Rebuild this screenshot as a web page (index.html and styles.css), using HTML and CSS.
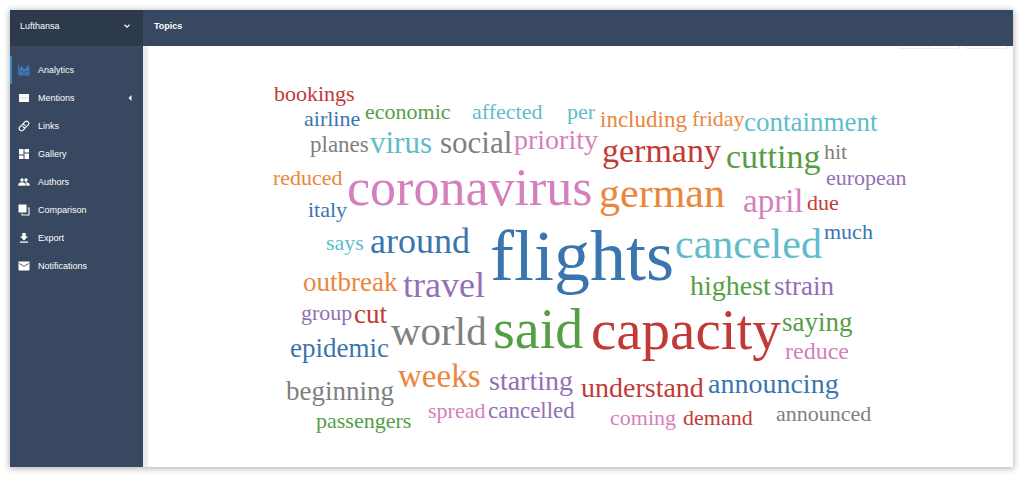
FILE: index.html
```html
<!DOCTYPE html>
<html lang="en">
<head>
<meta charset="utf-8">
<meta name="viewport" content="width=device-width, initial-scale=1">
<title>Topics</title>
<link rel="stylesheet" href="styles.css">
</head>
<body>
<div class="app">
  <header class="topbar">
    <div class="account">
      <select class="account-select" aria-label="Account"><option>Lufthansa</option></select>
      <svg class="account-chevron" viewBox="0 0 8 8" aria-hidden="true"><path d="M1.500 2.800 4 5.200 6.500 2.800" fill="none" stroke="currentColor" stroke-width="1.200"/></svg>
    </div>
    <h1 class="title">Topics</h1>
  </header>
  <div class="body">
    <nav class="sidebar" aria-label="Main">
      <a class="item active" href="#"><svg class="icon" viewBox="0 0 24 24"><path d="M1.500 2v20H24" fill="none" stroke="currentColor" stroke-width="2"/><path d="M3 20V9l5-5 4 6 4-2 4-6 3 5v13z" fill="currentColor" opacity=".85"/><path d="M4 17l4-4 4 5 4-4 3 3 3-4" fill="none" stroke="#2b4a74" stroke-width="1.500"/></svg><span>Analytics</span></a>
      <a class="item" href="#"><svg class="icon" viewBox="0 0 24 24"><path d="M2 4h20v16H2z" fill="currentColor"/><path d="M2 12h20" stroke="#c3c9d1" stroke-width="1.500"/></svg><span>Mentions</span><svg class="caret" viewBox="0 0 4 6"><path d="M3.500 0v6L.5 3z" fill="currentColor"/></svg></a>
      <a class="item" href="#"><svg class="icon" viewBox="0 0 24 24"><g transform="rotate(-45 12 12)" fill="none" stroke="currentColor" stroke-width="2.400" stroke-linecap="round"><path d="M10 16.500H5a4.500 4.500 0 0 1 0-9h5a4.500 4.500 0 0 1 4.300 5.500"/><path d="M14 7.500h5a4.500 4.500 0 0 1 0 9h-5A4.500 4.500 0 0 1 9.700 11"/></g></svg><span>Links</span></a>
      <a class="item" href="#"><svg class="icon" viewBox="0 0 24 24"><path d="M2 2h9v11H2zM2 15h9v7H2zM13 11h9v11h-9zM13 2h9v7h-9z" fill="currentColor"/></svg><span>Gallery</span></a>
      <a class="item" href="#"><svg class="icon" viewBox="0 0 24 24"><path d="M16 11c1.660 0 2.990-1.340 2.990-3S17.660 5 16 5s-3 1.340-3 3 1.340 3 3 3zm-8 0c1.660 0 2.990-1.340 2.990-3S9.660 5 8 5 5 6.340 5 8s1.340 3 3 3zm0 2c-2.330 0-7 1.170-7 3.500V19h14v-2.500c0-2.330-4.670-3.500-7-3.500zm8 0c-.29 0-.62.02-.97.05 1.160.84 1.970 1.970 1.970 3.450V19h6v-2.500c0-2.330-4.670-3.500-7-3.500z" fill="currentColor" stroke="currentColor" stroke-width=".8"/></svg><span>Authors</span></a>
      <a class="item" href="#"><svg class="icon" viewBox="0 0 24 24"><path d="M1 1h16v16H1z" fill="currentColor"/><path d="M19.500 8H22v14H8v-3" fill="none" stroke="currentColor" stroke-width="2.200"/></svg><span>Comparison</span></a>
      <a class="item" href="#"><svg class="icon" viewBox="0 0 24 24"><path d="M20 9h-4.500V2h-7v7H4l8 8zM4 19v2.500h16V19z" fill="currentColor"/></svg><span>Export</span></a>
      <a class="item" href="#"><svg class="icon" viewBox="0 0 24 24"><path d="M22 3H2C.9 3 1 3.900 1 5v14c0 1.100.9 2 2 2h18c1.100 0 2-.9 2-2V5c0-1.100.1-2-1-2zm-1 5-9 5.500L3 8V6.200l9 5.600 9-5.600z" fill="currentColor"/></svg><span>Notifications</span></a>
    </nav>
    <main class="content">
      <div class="toolbar" aria-hidden="true">
        <div class="group"><div class="segment"></div><div class="segment"></div></div>
        <div class="group single"></div>
      </div>
      <svg class="cloud" viewBox="148 49 865 418" role="img" aria-label="Topic word cloud">
        <text class="s22 red" x="274" y="101">bookings</text>
        <text class="s22 blue" x="304" y="126">airline</text>
        <text class="s22 green" x="365" y="119">economic</text>
        <text class="s22 teal" x="472" y="119">affected</text>
        <text class="s22 teal" x="567" y="119">per</text>
        <text class="s23 orange" x="600" y="127">including</text>
        <text class="s22 orange" x="692" y="126">friday</text>
        <text class="s27 teal" x="744" y="131">containment</text>
        <text class="s23 gray" x="310" y="152">planes</text>
        <text class="s31 teal" x="370" y="153">virus</text>
        <text class="s31 gray" x="440" y="153">social</text>
        <text class="s28 pink" x="514" y="149">priority</text>
        <text class="s34 red" x="602" y="162">germany</text>
        <text class="s34 green" x="726" y="168">cutting</text>
        <text class="s22 gray" x="824" y="159">hit</text>
        <text class="s22 purple" x="826" y="185">european</text>
        <text class="s22 orange" x="273" y="185">reduced</text>
        <text class="s52 pink" x="347" y="205">coronavirus</text>
        <text class="s42 orange" x="599" y="207">german</text>
        <text class="s33 pink" x="743" y="212">april</text>
        <text class="s22 red" x="807" y="210">due</text>
        <text class="s22 blue" x="308" y="217">italy</text>
        <text class="s22 teal" x="326" y="250">says</text>
        <text class="s36 blue" x="370" y="253">around</text>
        <text class="s72 blue" x="490" y="280">flights</text>
        <text class="s42 teal" x="675" y="258">canceled</text>
        <text class="s22 blue" x="824" y="239">much</text>
        <text class="s27 orange" x="303" y="291">outbreak</text>
        <text class="s36 purple" x="403" y="297">travel</text>
        <text class="s28 green" x="690" y="295">highest</text>
        <text class="s27 purple" x="774" y="295">strain</text>
        <text class="s22 purple" x="301" y="320">group</text>
        <text class="s27 red" x="354" y="323">cut</text>
        <text class="s41 gray" x="391" y="345">world</text>
        <text class="s56 green" x="493" y="348">said</text>
        <text class="s57 red" x="591" y="349">capacity</text>
        <text class="s27 green" x="782" y="331">saying</text>
        <text class="s24 pink" x="785" y="359">reduce</text>
        <text class="s27 blue" x="290" y="357">epidemic</text>
        <text class="s27 gray" x="286" y="400">beginning</text>
        <text class="s33 orange" x="398" y="387">weeks</text>
        <text class="s28 purple" x="489" y="390">starting</text>
        <text class="s28 red" x="581" y="397">understand</text>
        <text class="s28 blue" x="708" y="393">announcing</text>
        <text class="s22 green" x="316" y="428">passengers</text>
        <text class="s22 pink" x="428" y="418">spread</text>
        <text class="s23 purple" x="488" y="418">cancelled</text>
        <text class="s22 pink" x="610" y="425">coming</text>
        <text class="s22 red" x="683" y="425">demand</text>
        <text class="s22 gray" x="776" y="421">announced</text>
      </svg>
    </main>
  </div>
</div>
</body>
</html>
```
FILE: styles.css
```css
* { box-sizing: border-box; }

body {
  margin: 0;
  padding: 10px 11px 16px 10px;
  background: #fff;
  font: 9px/12px "Liberation Sans", Arial, sans-serif;
  color: #fff;
}

.app {
  background: #fff;
  box-shadow: 0 1px 6px 1px rgba(0, 0, 0, .28);
}

.topbar {
  display: flex;
  height: 36px;
  background: #384860;
}

.account {
  position: relative;
  flex: 0 0 133px;
  display: flex;
  background: #2d3a4c;
}

.account-select {
  flex: 1;
  padding: 0 24px 4px 10px;
  border: 0;
  appearance: none;
  background: transparent;
  color: inherit;
  font: inherit;
}

.account-chevron {
  position: absolute;
  right: 12px;
  top: 12px;
  width: 8px;
  height: 8px;
  pointer-events: none;
}

.title {
  margin: 0;
  padding: 10px 11px;
  font-size: 9px;
  line-height: 12px;
  font-weight: bold;
}

.body { display: flex; }

.sidebar {
  flex: 0 0 133px;
  padding-top: 10px;
  background: #384860;
}

.item {
  display: flex;
  align-items: center;
  gap: 8px;
  height: 28px;
  padding: 0 11px 0 6px;
  border-left: 2px solid transparent;
  color: inherit;
  text-decoration: none;
}

.item.active { border-left-color: #3e8ac6; }
.item.active .icon { color: #3f86c8; }

.icon {
  width: 12px;
  height: 12px;
}

.caret {
  width: 4px;
  height: 6px;
  margin-left: auto;
}

.content {
  flex: 1;
  min-width: 0;
  border-left: 5px solid #e9edf0;
}

.toolbar {
  display: flex;
  justify-content: flex-end;
  gap: 5px;
  height: 3px;
  padding-right: 5px;
}

.group {
  display: flex;
  border: 1px solid #ededed;
  border-top: 0;
  border-radius: 0 0 3px 3px;
}

.segment { width: 30px; }
.segment + .segment { border-left: 1px solid #ededed; }
.single { width: 43px; }

.cloud {
  display: block;
  width: 100%;
  height: auto;
  font-family: "Liberation Serif", "Times New Roman", serif;
}

.s22 { font-size: 22px; }
.s23 { font-size: 23px; }
.s24 { font-size: 24px; }
.s27 { font-size: 27px; }
.s28 { font-size: 28px; }
.s31 { font-size: 31px; }
.s33 { font-size: 33px; }
.s34 { font-size: 34px; }
.s36 { font-size: 36px; }
.s41 { font-size: 41px; }
.s42 { font-size: 42px; }
.s52 { font-size: 52px; }
.s56 { font-size: 56px; }
.s57 { font-size: 57px; }
.s72 { font-size: 72px; }

.red { fill: #c23a35; }
.blue { fill: #3b75af; }
.green { fill: #559e45; }
.teal { fill: #60bccb; }
.orange { fill: #ea873c; }
.gray { fill: #7f7f7f; }
.pink { fill: #d57fbc; }
.purple { fill: #9270b6; }
```
